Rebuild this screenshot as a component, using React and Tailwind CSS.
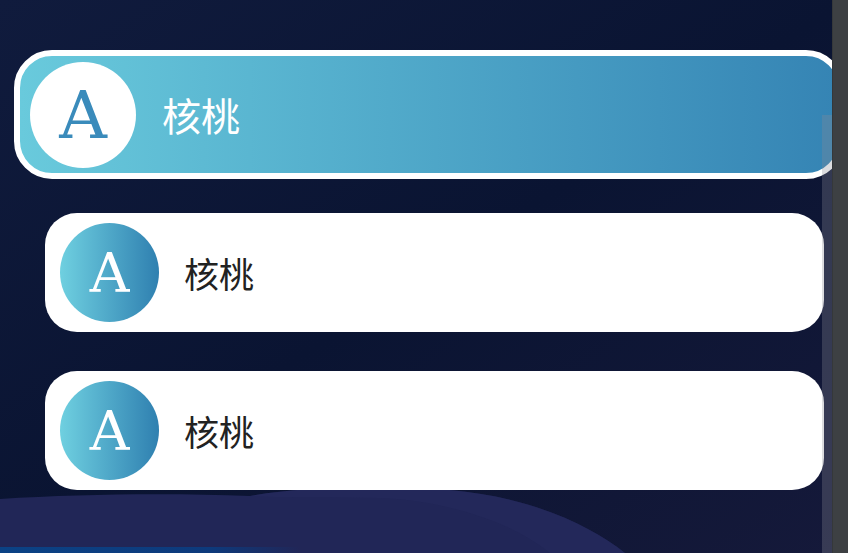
import React from "react";

const cjk = { fontFamily: '"Noto Sans CJK SC", "Noto Sans", sans-serif' };
const serif = { fontFamily: '"DejaVu Serif", "Liberation Serif", serif' };

function ActiveCard() {
  return (
    <div className="ml-[14px] w-[830px] shrink-0 h-[129px] rounded-[38px] border-[6px] border-white bg-gradient-to-r from-[#69cadc] to-[#3584b4] flex items-center pl-[10px]">
      <div className="w-[106px] h-[106px] rounded-full bg-white flex items-center justify-center shrink-0">
        <span className="text-[66px] leading-none text-[#3a8bbb] mt-[2px]" style={serif}>A</span>
      </div>
      <span className="ml-[26px] text-[39px] leading-none text-white" style={cjk}>核桃</span>
    </div>
  );
}

function Card() {
  return (
    <div className="ml-[45px] w-[779px] shrink-0 h-[119px] rounded-[32px] bg-white flex items-center pl-[15px]">
      <div className="w-[99px] h-[99px] rounded-full bg-gradient-to-r from-[#6fd0e0] to-[#2f80b0] flex items-center justify-center shrink-0">
        <span className="text-[55px] leading-none text-white mt-[2px]" style={serif}>A</span>
      </div>
      <span className="ml-[25px] text-[35px] leading-none text-[#222222]" style={cjk}>核桃</span>
    </div>
  );
}

export default function App() {
  return (
    <div className="relative w-[848px] h-[553px] overflow-hidden flex bg-gradient-to-br from-[#101b3d] via-[#0a1432] to-[#15193a]">
      <svg className="absolute left-0 bottom-0" width="848" height="70" viewBox="0 483 848 70">
        <defs>
          <linearGradient id="blueFade" x1="0" x2="1" y1="0" y2="0">
            <stop offset="0" stopColor="#0b4285" />
            <stop offset="0.7" stopColor="#0d3a7c" />
            <stop offset="1" stopColor="#0d3a7c" stopOpacity="0" />
          </linearGradient>
        </defs>
        <path
          d="M0,499 C80,494 170,493 250,496 C300,487 380,485 450,490 C530,497 590,525 625,553 L0,553 Z"
          fill="#212657"
        />
        <path
          d="M250,496 C300,487 380,485 450,490 C530,497 590,525 625,553 L550,553 C510,520 440,500 380,498 C330,497 290,498 250,496 Z"
          fill="#252a5c"
          opacity="0.6"
        />
        <rect x="0" y="547" width="300" height="6" fill="url(#blueFade)" />
      </svg>
      <div className="relative w-[832px] h-full overflow-hidden flex flex-col pt-[50px]">
        <ActiveCard />
        <div className="mt-[34px]">
          <Card />
        </div>
        <div className="mt-[39px]">
          <Card />
        </div>
        <div className="absolute right-0 top-[115px] bottom-0 w-[10px] bg-[rgba(140,140,150,0.3)]" />
      </div>
      <div className="relative w-[16px] h-full bg-[#3d4043] border-l border-[#35383a]" />
    </div>
  );
}
